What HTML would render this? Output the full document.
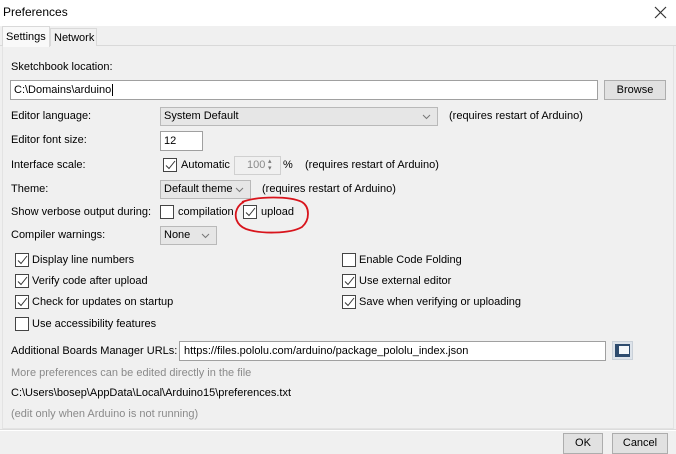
<!DOCTYPE html>
<html><head><meta charset="utf-8"><style>
*{box-sizing:border-box;margin:0;padding:0}
body{width:676px;height:454px;background:#f0f0f0;font-family:"Liberation Sans",sans-serif;font-size:11px;color:#000;position:relative;overflow:hidden}
.a{position:absolute;white-space:nowrap}
.t{line-height:15px}
.inp{position:absolute;background:#fff;border:1px solid #a0a0a0}
.btn{position:absolute;background:#e1e1e1;border:1px solid #adadad;text-align:center}
.sel{position:absolute;background:#e6e6e6;border:1px solid #b9b9b9}
.cb{position:absolute;width:14px;height:14px;border:1px solid #444;background:#fff}
.cb svg{position:absolute;left:0px;top:0px}
.g{color:#8a8a8a}
.arr{position:absolute;right:6px;top:4px}
</style></head><body>
<div class="a" style="left:0;top:0;width:676px;height:26px;background:#fff"></div>
<div class="a t" style="left:3px;top:5px;font-size:12px">Preferences</div>
<svg class="a" style="left:654px;top:6px" width="13" height="13"><path d="M1 1L12 12M12 1L1 12" stroke="#333" stroke-width="1.2"/></svg>
<div class="a" style="left:0;top:26px;width:676px;height:20px;background:#f0f0f0;border-bottom:1px solid #d9d9d9"></div>
<div class="a" style="left:2px;top:26px;width:48px;height:21px;background:#f9f9f9;border:1px solid #d9d9d9;border-bottom:none"></div>
<div class="a t" style="left:6px;top:30px">Settings</div>
<div class="a" style="left:50px;top:28px;width:47px;height:18px;background:#f0f0f0;border:1px solid #d9d9d9;border-bottom:none"></div>
<div class="a t" style="left:54px;top:31px">Network</div>
<div class="a" style="left:2px;top:46px;width:672px;height:383px;border:1px solid #e3e3e3;border-top:none"></div>

<div class="a t" style="left:11px;top:60px">Sketchbook location:</div>
<div class="inp" style="left:10px;top:80px;width:588px;height:20px"></div>
<div class="a t" style="left:14px;top:83px">C:\Domains\arduino<span style="border-left:1px solid #000;margin-left:1px"></span></div>
<div class="btn" style="left:604px;top:80px;width:62px;height:20px;line-height:18px">Browse</div>

<div class="a t" style="left:11px;top:109px">Editor language:</div>
<div class="sel" style="left:160px;top:107px;width:278px;height:19px"><svg class="arr" width="9" height="9"><path d="M1 3L4.5 6.5L8 3" stroke="#777" fill="none"/></svg></div>
<div class="a t" style="left:164px;top:109px">System Default</div>
<div class="a t" style="left:449px;top:109px">(requires restart of Arduino)</div>

<div class="a t" style="left:11px;top:133px">Editor font size:</div>
<div class="inp" style="left:160px;top:131px;width:43px;height:20px"></div>
<div class="a t" style="left:164px;top:134px">12</div>

<div class="a t" style="left:11px;top:158px">Interface scale:</div>
<div class="cb" style="left:163px;top:158px"><svg width="12" height="12"><path d="M2 6.5L5 9.5L11 2" stroke="#333" fill="none"/></svg></div>
<div class="a t" style="left:181px;top:158px">Automatic</div>
<div class="a" style="left:234px;top:156px;width:47px;height:19px;background:#f0f0f0;border:1px solid #d0d0d0"></div>
<div class="a t g" style="left:247px;top:158px">100</div>
<div class="a" style="left:268px;top:158px;font-size:7px;line-height:7px;color:#777">▴<br>▾</div>
<div class="a t" style="left:283px;top:158px">%</div>
<div class="a t" style="left:305px;top:158px">(requires restart of Arduino)</div>

<div class="a t" style="left:11px;top:182px">Theme:</div>
<div class="sel" style="left:160px;top:180px;width:91px;height:19px"><svg class="arr" width="9" height="9"><path d="M1 3L4.5 6.5L8 3" stroke="#777" fill="none"/></svg></div>
<div class="a t" style="left:164px;top:182px">Default theme</div>
<div class="a t" style="left:262px;top:182px">(requires restart of Arduino)</div>

<div class="a t" style="left:11px;top:205px">Show verbose output during:</div>
<div class="cb" style="left:160px;top:205px"></div>
<div class="a t" style="left:178px;top:205px">compilation</div>
<div class="cb" style="left:243px;top:205px"><svg width="12" height="12"><path d="M2 6.5L5 9.5L11 2" stroke="#333" fill="none"/></svg></div>
<div class="a t" style="left:261px;top:205px">upload</div>
<svg class="a" style="left:230px;top:194px" width="82" height="42"><path d="M12 8C28 2 60 2 72 8C80 13 80 26 72 33C60 40 30 40 16 35C6 31 4 22 7 15C9 11 11 9 14 8" stroke="#d8141c" stroke-width="1.8" fill="none"/></svg>

<div class="a t" style="left:11px;top:228px">Compiler warnings:</div>
<div class="sel" style="left:160px;top:226px;width:57px;height:19px"><svg class="arr" width="9" height="9"><path d="M1 3L4.5 6.5L8 3" stroke="#777" fill="none"/></svg></div>
<div class="a t" style="left:164px;top:228px">None</div>

<div class="cb" style="left:15px;top:253px"><svg width="12" height="12"><path d="M2 6.5L5 9.5L11 2" stroke="#333" fill="none"/></svg></div>
<div class="a t" style="left:32px;top:253px">Display line numbers</div>
<div class="cb" style="left:15px;top:274px"><svg width="12" height="12"><path d="M2 6.5L5 9.5L11 2" stroke="#333" fill="none"/></svg></div>
<div class="a t" style="left:32px;top:274px">Verify code after upload</div>
<div class="cb" style="left:15px;top:295px"><svg width="12" height="12"><path d="M2 6.5L5 9.5L11 2" stroke="#333" fill="none"/></svg></div>
<div class="a t" style="left:32px;top:295px">Check for updates on startup</div>
<div class="cb" style="left:15px;top:317px"></div>
<div class="a t" style="left:32px;top:317px">Use accessibility features</div>

<div class="cb" style="left:342px;top:253px"></div>
<div class="a t" style="left:359px;top:253px">Enable Code Folding</div>
<div class="cb" style="left:342px;top:274px"><svg width="12" height="12"><path d="M2 6.5L5 9.5L11 2" stroke="#333" fill="none"/></svg></div>
<div class="a t" style="left:359px;top:274px">Use external editor</div>
<div class="cb" style="left:342px;top:295px"><svg width="12" height="12"><path d="M2 6.5L5 9.5L11 2" stroke="#333" fill="none"/></svg></div>
<div class="a t" style="left:359px;top:295px">Save when verifying or uploading</div>

<div class="a t" style="left:11px;top:344px">Additional Boards Manager URLs:</div>
<div class="inp" style="left:179px;top:341px;width:427px;height:20px"></div>
<div class="a t" style="left:184px;top:344px">https://files.pololu.com/arduino/package_pololu_index.json</div>
<div class="a" style="left:612px;top:341px;width:21px;height:19px;background:#dde3ea;border:1px solid #c9d0d8"></div>
<div class="a" style="left:615px;top:344px;width:15px;height:13px;background:#2d4b6e"></div>
<div class="a" style="left:619px;top:346px;width:10px;height:8px;background:#f4f7fa"></div>

<div class="a t g" style="left:11px;top:366px">More preferences can be edited directly in the file</div>
<div class="a t" style="left:11px;top:386px">C:\Users\bosep\AppData\Local\Arduino15\preferences.txt</div>
<div class="a t g" style="left:11px;top:407px">(edit only when Arduino is not running)</div>

<div class="a" style="left:0;top:429px;width:676px;height:1px;background:#dcdcdc"></div>
<div class="a" style="left:0;top:430px;width:676px;height:1px;background:#fff"></div>
<div class="btn" style="left:563px;top:433px;width:40px;height:21px;line-height:19px">OK</div>
<div class="btn" style="left:612px;top:433px;width:56px;height:21px;line-height:19px">Cancel</div>
</body></html>
